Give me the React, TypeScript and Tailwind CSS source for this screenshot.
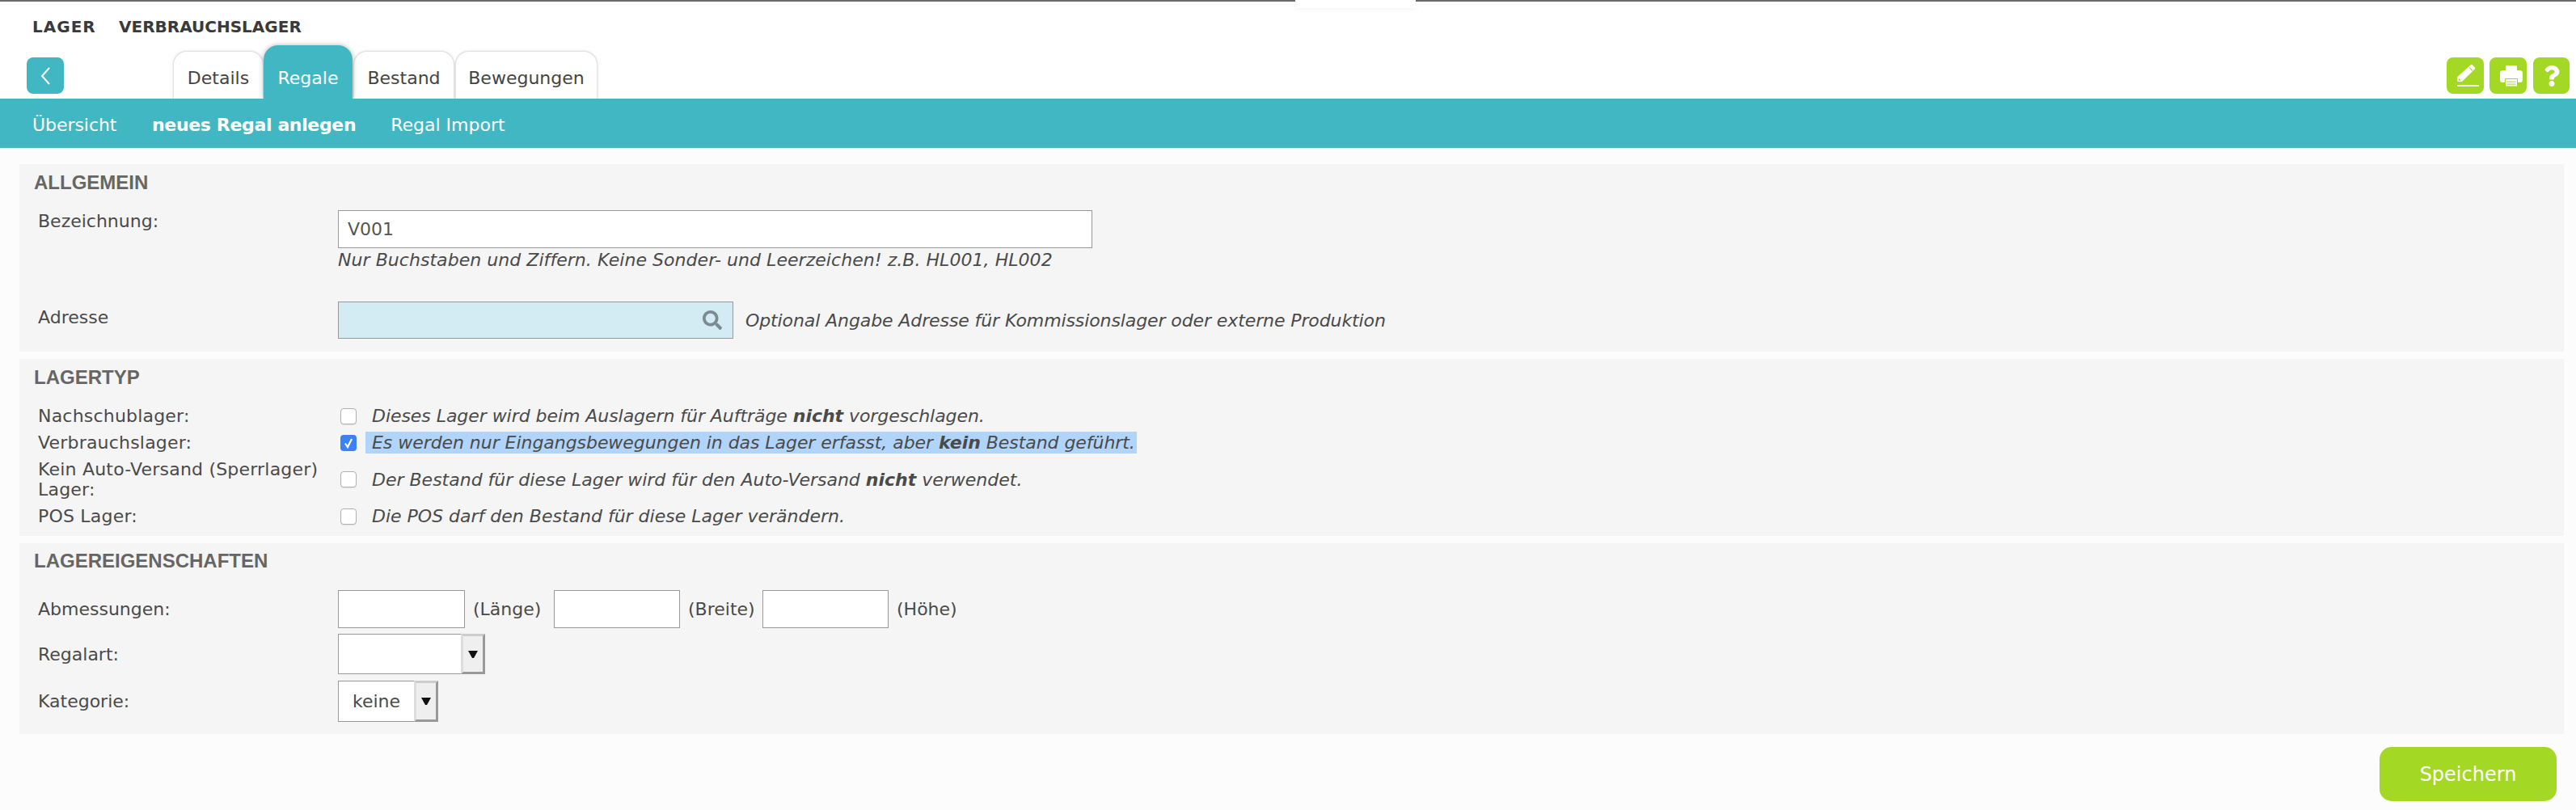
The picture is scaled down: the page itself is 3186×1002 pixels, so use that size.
import type { ReactNode } from "react";
import { FaQuestion, FaSearch } from "react-icons/fa";

const font = "font-['DejaVu_Sans',Verdana,sans-serif]";

function Pencil() {
  return (
    <svg viewBox="0 0 46 45" className="w-[46px] h-[45px]">
      <path d="M13.3 30 L13.3 24 L30 9 Q31 8.4 32 9.2 L35 12.5 Q35.6 13.4 35 14.2 L19 30 Z" fill="white" />
      <path d="M28.2 12.6 L32 16.2" stroke="#a3d925" strokeWidth="1.2" fill="none" />
      <path d="M15 25.8 L15 28.6 L18 28.6 Z" fill="#a3d925" />
      <rect x="13" y="34" width="27" height="2" fill="white" />
    </svg>
  );
}

function Printer() {
  return (
    <svg viewBox="0 0 46 45" className="w-[46px] h-[45px]">
      <rect x="20" y="10" width="14" height="8" fill="white" />
      <rect x="13" y="16" width="28" height="15" rx="3.5" fill="white" />
      <rect x="19" y="26" width="16" height="10.5" fill="#a3d925" />
      <rect x="20" y="27" width="14" height="8.5" fill="white" />
      <rect x="21.5" y="29.6" width="11" height="1" fill="#a3d925" />
      <rect x="21.5" y="32.6" width="11" height="1" fill="#a3d925" />
    </svg>
  );
}

function Tab({ label, active, className }: { label: string; active?: boolean; className: string }) {
  return (
    <div
      className={
        active
          ? `${className} h-[66px] bg-[#42b7c4] text-white rounded-t-[18px] shadow-[0_0_6px_rgba(0,0,0,0.3)] flex items-start justify-center pt-[24px] z-10`
          : `${className} h-[59px] bg-white text-[#444] rounded-t-[17px] border border-b-0 border-[#e2e2e2] shadow-[0_0_3px_rgba(0,0,0,0.15)] flex items-start justify-center pt-[16px]`
      }
    >
      {label}
    </div>
  );
}

function Section({ title, children, className }: { title: string; children: ReactNode; className: string }) {
  return (
    <section className={`bg-[#f5f5f5] pl-[23px] ${className}`}>
      <h2 className="-ml-[5px] font-['Liberation_Sans',Arial,sans-serif] font-bold text-[24px] leading-[28px] text-[#666]">{title}</h2>
      {children}
    </section>
  );
}

function Check({ checked }: { checked?: boolean }) {
  return checked ? (
    <span className="w-[20px] h-[20px] rounded-[4px] bg-[#3b82f6] flex items-center justify-center shrink-0">
      <svg viewBox="0 0 20 20" className="w-[20px] h-[20px]" fill="none" stroke="white" strokeWidth="2.2">
        <path d="M6 10.5 L9 15 L14 5" />
      </svg>
    </span>
  ) : (
    <span className="w-[20px] h-[20px] rounded-[4px] bg-white border border-[#b0b0b0] shadow-[0_1px_1px_rgba(0,0,0,0.08)] shrink-0" />
  );
}

function TypeRow({ label, check, h, children }: { label: ReactNode; check?: boolean; h: string; children: ReactNode }) {
  return (
    <div className={`grid grid-cols-[374px_1fr] items-center ${h}`}>
      <div className="leading-[25px] tracking-[0.2px]">{label}</div>
      <div className="flex items-center">
        <Check checked={check} />
        {children}
      </div>
    </div>
  );
}

function Select({ width, height, btn, label }: { width: string; height: string; btn: string; label?: string }) {
  return (
    <div className={`${width} ${height} flex`}>
      <div className="flex-1 flex items-center pl-[17px] bg-white border border-r-0 border-[#999]">{label}</div>
      <div className={`${btn} bg-[#efefef] border-[3px] border-t-[#cccccc] border-l-[#dddddd] border-r-[#999999] border-b-[#999999] flex items-center justify-center`}>
        <svg viewBox="0 0 12 9" className="w-[12px] h-[9px]" fill="#111">
          <path d="M0 0 H12 L7 9 H5 Z" />
        </svg>
      </div>
    </div>
  );
}

export default function App() {
  return (
    <div className={`${font} w-[3186px] h-[1002px] bg-[#fcfcfc] text-[#4a4a4a] text-[22px] overflow-hidden`}>
      <div className="flex h-[2px]">
        <div className="w-[1602px] bg-[#6a6a6a]" />
        <div className="relative z-20 w-[149px] h-[10px] bg-white shadow-[0_1px_6px_rgba(0,0,0,0.06)]" />
        <div className="flex-1 bg-[#6a6a6a]" />
      </div>
      <header className="bg-white h-[120px] flex flex-col">
        <div className="h-[54px] pl-[40px] pt-[16px] flex text-[20px] leading-[30px] font-bold text-[#3a3a3a]">
          <span className="w-[107px] tracking-[1px]">LAGER</span>
          <span>VERBRAUCHSLAGER</span>
        </div>
        <div className="h-[66px] flex items-end">
          <button className="ml-[33px] mb-[6px] w-[46px] h-[45px] bg-[#42b7c4] rounded-[8px] flex items-center justify-center">
            <svg viewBox="0 0 14 22" className="w-[14px] h-[22px]" fill="none" stroke="white" strokeWidth="2">
              <path d="M12 1 L3 11 L12 21" />
            </svg>
          </button>
          <nav className="ml-[135px] flex items-end">
            <Tab label="Details" className="w-[112px]" />
            <Tab label="Regale" active className="w-[110px]" />
            <Tab label="Bestand" className="w-[125px] ml-px" />
            <Tab label="Bewegungen" className="w-[176px] ml-px" />
          </nav>
          <div className="ml-auto mr-[8px] mb-[6px] flex gap-[7px]">
            <button className="w-[46px] h-[45px] bg-[#a3d925] rounded-[8px]"><Pencil /></button>
            <button className="w-[46px] h-[45px] bg-[#a3d925] rounded-[8px]"><Printer /></button>
            <button className="w-[45px] h-[45px] ml-px bg-[#a3d925] rounded-[8px] flex items-center justify-center text-white"><FaQuestion size={26} /></button>
          </div>
        </div>
      </header>
      <div className="relative z-20 h-[61px] bg-[#42b7c4] text-white flex items-center pl-[40px] pt-[4px]">
        <span className="w-[104px] whitespace-nowrap tracking-[-0.05px]">Übersicht</span>
        <span className="ml-[44px] font-bold tracking-[-0.35px]">neues Regal anlegen</span>
        <span className="ml-[43px]">Regal Import</span>
      </div>

      <main className="pl-[24px] pr-[15px] pt-[20px] flex flex-col">
        <Section title="ALLGEMEIN" className="h-[232px] pt-[9px]">
          <div className="grid grid-cols-[371px_1fr] mt-[20px]">
            <div className="mt-[-1px] leading-[30px]">Bezeichnung:</div>
            <div>
              <input readOnly value="V001" className="block w-[933px] h-[47px] border border-[#999] bg-white pl-[11px] text-[#555] outline-none" />
              <div className="italic leading-[30px] tracking-[0.05px]">Nur Buchstaben und Ziffern. Keine Sonder- und Leerzeichen! z.B. HL001, HL002</div>
            </div>
          </div>
          <div className="grid grid-cols-[371px_1fr] mt-[36px] items-center">
            <div className="mt-[-7px]">Adresse</div>
            <div className="flex items-center">
              <div className="w-[489px] h-[46px] border border-[#999] bg-[#d3ebf2] flex items-center justify-end pr-[13px] text-[#7b8b8f]">
                <FaSearch size={24} />
              </div>
              <span className="italic ml-[15px] tracking-[-0.1px]">Optional Angabe Adresse für Kommissionslager oder externe Produktion</span>
            </div>
          </div>
        </Section>

        <Section title="LAGERTYP" className="mt-[9px] h-[219px] pt-[9px]">
          <div className="mt-[17px] flex flex-col">
            <TypeRow label="Nachschublager:" h="h-[33px]">
              <span className="italic ml-[19px] tracking-[-0.05px]">Dieses Lager wird beim Auslagern für Aufträge <b>nicht</b> vorgeschlagen.</span>
            </TypeRow>
            <TypeRow label="Verbrauchslager:" check h="h-[33px]">
              <span className="italic ml-[11px] pl-[8px] pr-[2px] h-[27px] leading-[27px] bg-[#b1d4fa] tracking-[-0.05px]">Es werden nur Eingangsbewegungen in das Lager erfasst, aber <b>kein</b> Bestand geführt.</span>
            </TypeRow>
            <TypeRow label={<>Kein Auto-Versand (Sperrlager)<br />Lager:</>} h="h-[58px]">
              <span className="italic ml-[19px]">Der Bestand für diese Lager wird für den Auto-Versand <b>nicht</b> verwendet.</span>
            </TypeRow>
            <TypeRow label="POS Lager:" h="h-[32px]">
              <span className="italic ml-[19px]">Die POS darf den Bestand für diese Lager verändern.</span>
            </TypeRow>
          </div>
        </Section>

        <Section title="LAGEREIGENSCHAFTEN" className="mt-[9px] h-[236px] pt-[8px]">
          <div className="mt-[22px] flex flex-col gap-[7px]">
            <div className="grid grid-cols-[371px_1fr] items-center">
              <span>Abmessungen:</span>
              <div className="flex items-center">
                <input readOnly className="w-[157px] h-[47px] border border-[#999] bg-white" />
                <span className="ml-[10px] w-[100px]">(Länge)</span>
                <input readOnly className="w-[156px] h-[47px] border border-[#999] bg-white" />
                <span className="ml-[10px] w-[92px]">(Breite)</span>
                <input readOnly className="w-[156px] h-[47px] border border-[#999] bg-white" />
                <span className="ml-[10px]">(Höhe)</span>
              </div>
            </div>
            <div className="grid grid-cols-[371px_1fr] items-center">
              <span>Regalart:</span>
              <Select width="w-[182px]" height="h-[50px]" btn="w-[30px]" />
            </div>
            <div className="grid grid-cols-[371px_1fr] items-center mt-px">
              <span>Kategorie:</span>
              <Select width="w-[124px]" height="h-[51px]" btn="w-[30px]" label="keine" />
            </div>
          </div>
        </Section>
      </main>

      <div className="flex justify-end pr-[24px] mt-[16px]">
        <button className="w-[219px] h-[67px] rounded-[15px] bg-[#a3d925] text-white text-[24px]">Speichern</button>
      </div>
    </div>
  );
}
